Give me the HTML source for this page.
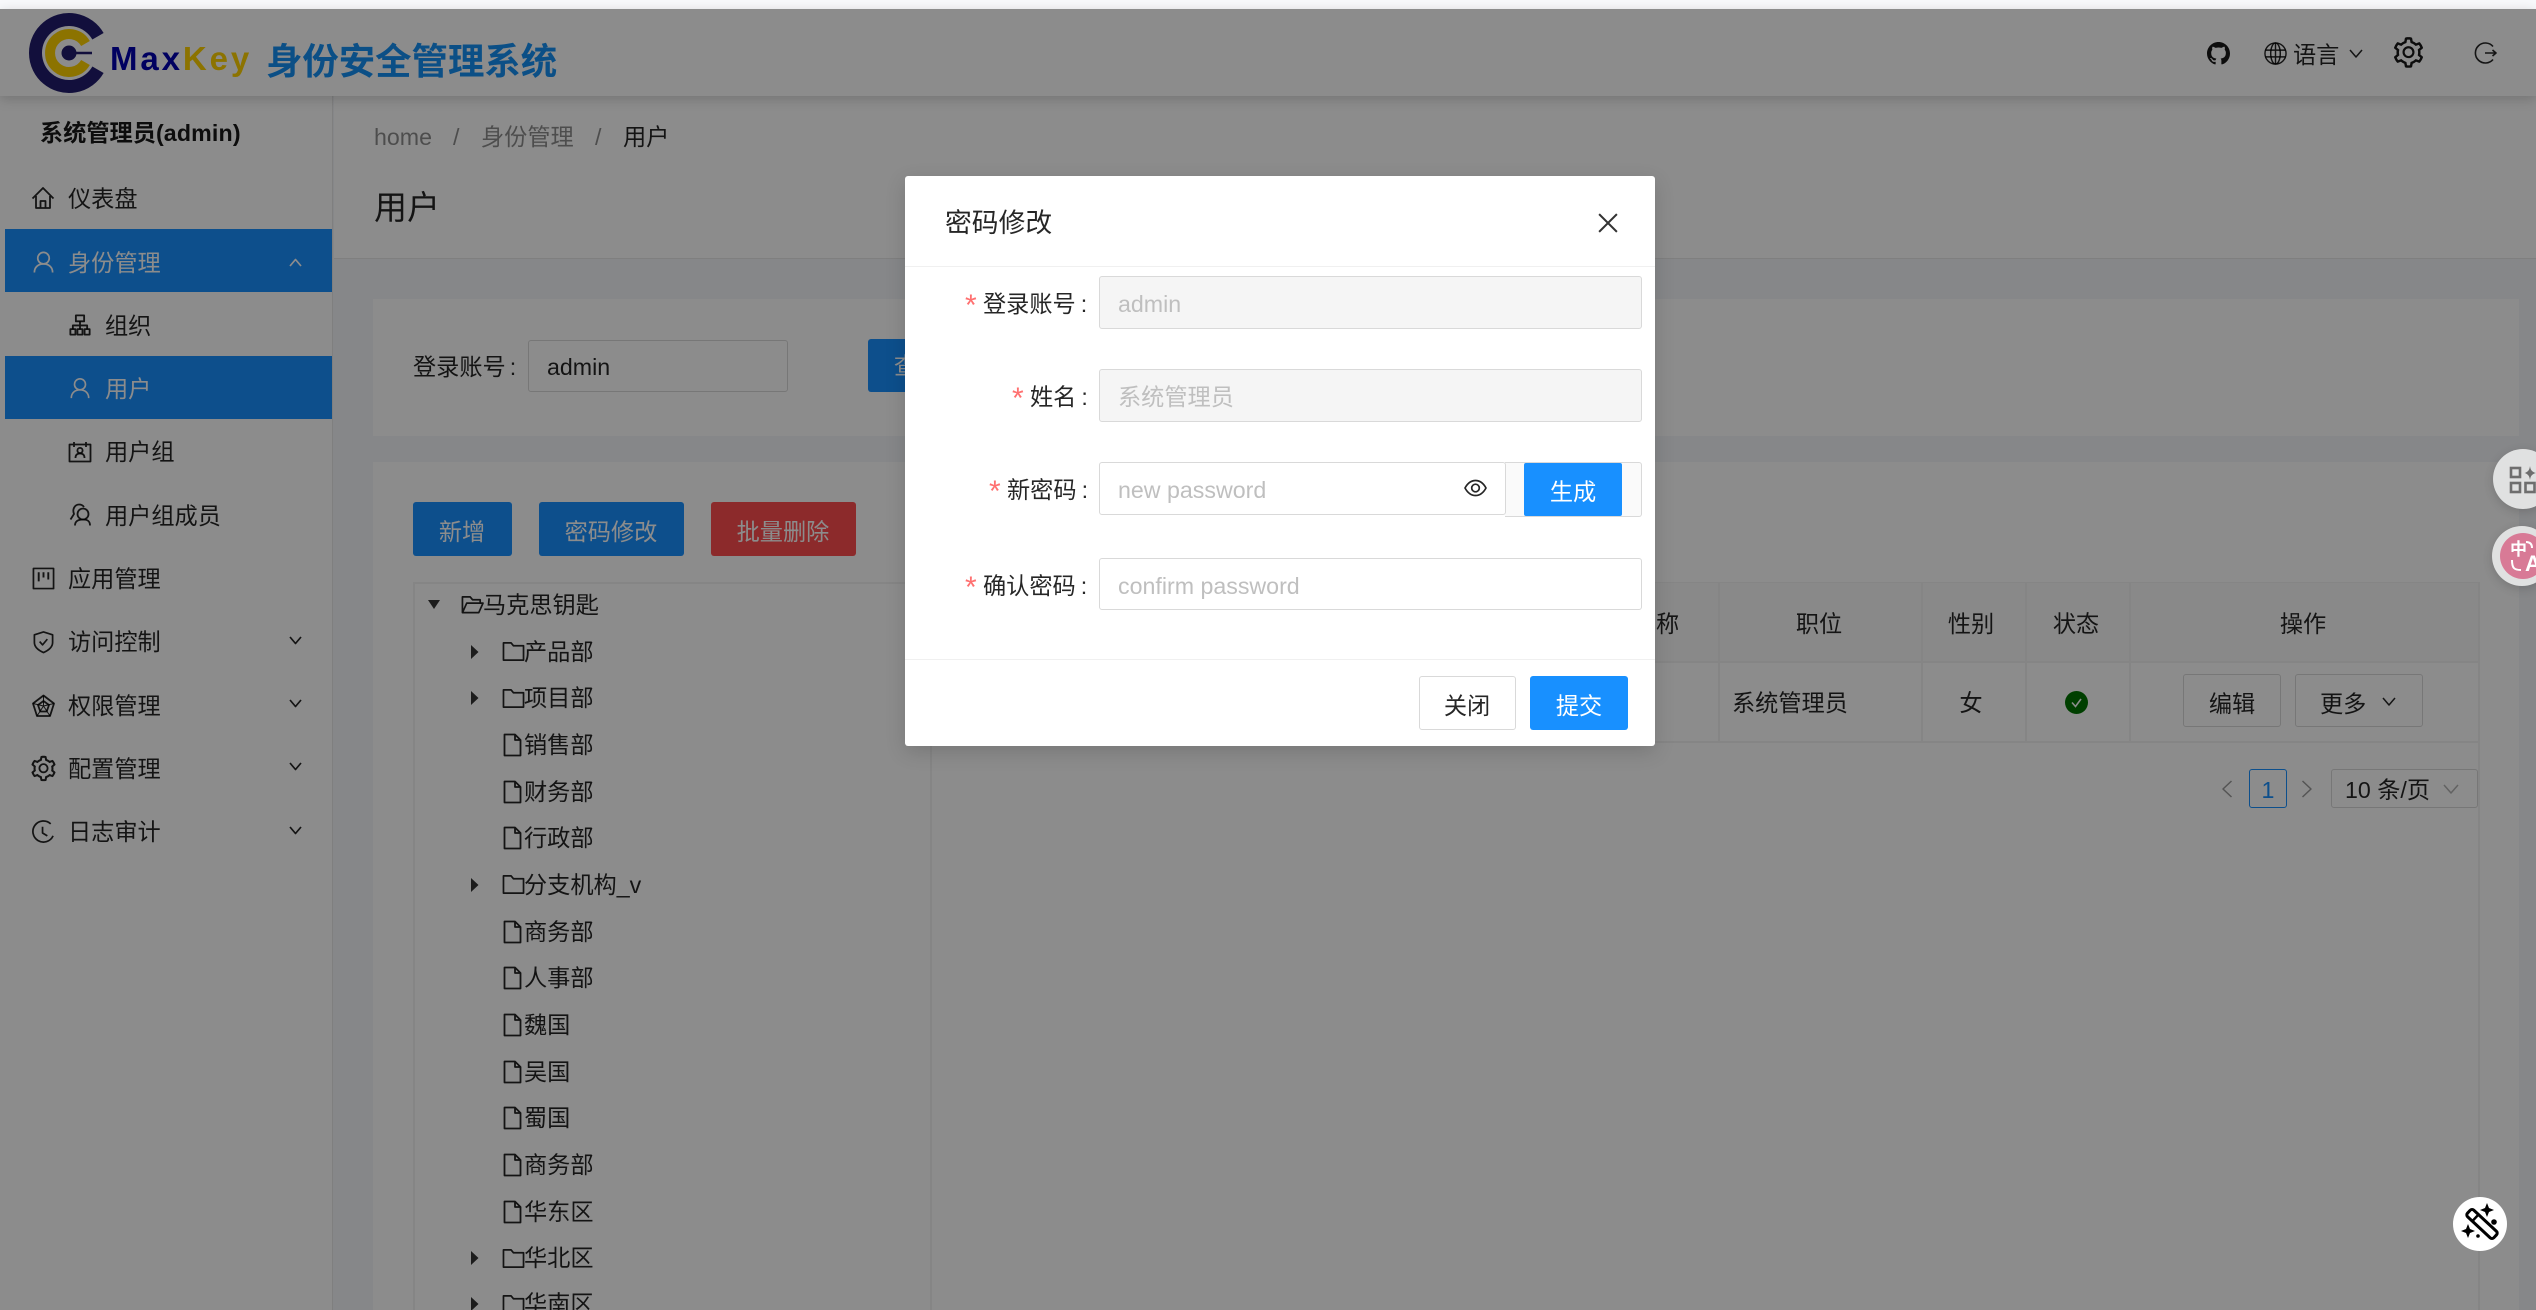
<!DOCTYPE html>
<html lang="zh">
<head>
<meta charset="utf-8">
<title>MaxKey</title>
<style>
html,body{margin:0;padding:0;width:2536px;height:1310px;overflow:hidden;background:#f5f6f9}
body{position:relative;font-family:"Liberation Sans","Noto Sans CJK SC",sans-serif;font-size:23.2px;color:rgba(0,0,0,.85)}
div,span,svg{box-sizing:border-box}
.a{position:absolute}
.t{position:absolute;white-space:nowrap;line-height:40px;margin-top:-19.3px}
.c{position:absolute;white-space:nowrap;line-height:40px;margin-top:-19.3px;transform:translateX(-50%)}
.w{color:#fff}
.i{position:absolute;fill:none;stroke:rgba(0,0,0,.85);stroke-width:1.8;stroke-linejoin:round}
.btn{position:absolute;border-radius:3px}
.inp{position:absolute;border:1.6px solid #d9d9d9;border-radius:3px;background:#fff}
.star{position:absolute;color:#ff7070;font-size:30px;line-height:40px;margin-top:-17px}
.ph{color:#bfbfbf}
.line{position:absolute;background:#f2f2f2}
.col{margin-left:5px}
</style>
</head>
<body>
<!-- top strip -->
<div class="a" style="left:0;top:0;width:2536px;height:9px;background:#f8f9fb"></div>

<!-- header -->
<div class="a" style="left:0;top:9px;width:2536px;height:87px;background:#fff;box-shadow:0 3px 12px rgba(0,0,0,.18);z-index:3"></div>
<div class="a" style="left:0;top:0;width:2536px;height:96px;z-index:4">
  <svg class="a" style="left:0;top:0" width="120" height="96" fill="none">
    <path d="M98 36.25A33.5 33.5 0 1 0 98 69.75" stroke="#211d6e" stroke-width="13"/>
    <path d="M85.5 43.5A19 19 0 1 0 85.5 62.5" stroke="#ffd200" stroke-width="10"/>
    <circle cx="69" cy="53" r="7.5" fill="#211d6e"/>
    <path d="M70 53H92" stroke="#211d6e" stroke-width="2.6"/>
  </svg>
  <div class="t" style="left:110px;top:58.500px;font-size:33px;font-weight:bold;letter-spacing:2.9px"><span style="color:#0000b0">Max</span><span style="color:#ffd200">Key</span></div>
  <div class="t" style="left:266px;top:58.500px;font-size:36.400px;font-weight:bold;color:#1590f5;font-family:'Noto Sans CJK SC',sans-serif">身份安全管理系统</div>

  <svg class="a" style="left:2207px;top:42px" width="23" height="23" viewBox="0 0 16 16"><path fill="rgba(0,0,0,.9)" d="M8 0C3.58 0 0 3.58 0 8c0 3.54 2.29 6.53 5.47 7.59.4.07.55-.17.55-.38 0-.19-.01-.82-.01-1.49-2.01.37-2.53-.49-2.69-.94-.09-.23-.48-.94-.82-1.13-.28-.15-.68-.52-.01-.53.63-.01 1.08.58 1.23.82.72 1.21 1.87.87 2.33.66.07-.52.28-.87.51-1.07-1.78-.2-3.64-.89-3.64-3.95 0-.87.31-1.59.82-2.15-.08-.2-.36-1.02.08-2.12 0 0 .67-.21 2.2.82.64-.18 1.32-.27 2-.27.68 0 1.36.09 2 .27 1.53-1.04 2.2-.82 2.2-.82.44 1.1.16 1.92.08 2.12.51.56.82 1.27.82 2.15 0 3.07-1.87 3.75-3.65 3.95.29.25.54.73.54 1.48 0 1.07-.01 1.93-.01 2.2 0 .21.15.46.55.38A8.013 8.013 0 0016 8c0-4.42-3.58-8-8-8z"/></svg>
  <svg class="i" style="left:2264px;top:42px;stroke-width:1.5" width="23" height="23" viewBox="0 0 24 24"><circle cx="12" cy="12" r="11"/><ellipse cx="12" cy="12" rx="5" ry="11"/><path d="M12 1V23M1.5 8.5H22.5M1.5 15.5H22.5"/></svg>
  <div class="t" style="left:2293px;top:54px">语言</div>
  <svg class="i" style="left:2349px;top:49px;stroke-width:1.5" width="14" height="9" viewBox="0 0 14 9"><path d="M1 1L7 8L13 1"/></svg>
  <svg class="a" style="left:2391px;top:35px" width="35" height="35" viewBox="0 0 1024 1024"><path fill="rgba(0,0,0,.9)" d="M924.8 625.7l-65.5-56c3.1-19 4.7-38.4 4.7-57.8s-1.6-38.8-4.7-57.8l65.5-56a32.03 32.03 0 0 0 9.3-35.2l-.9-2.6a443.74 443.74 0 0 0-79.7-137.9l-1.8-2.1a32.12 32.12 0 0 0-35.1-9.5l-81.3 28.9c-30-24.6-63.5-44-99.7-57.6l-15.7-85a32.05 32.05 0 0 0-25.8-25.7l-2.7-.5c-52.1-9.4-106.9-9.4-159 0l-2.7.5a32.05 32.05 0 0 0-25.8 25.7l-15.8 85.4a351.86 351.86 0 0 0-99 57.4l-81.9-29.1a32 32 0 0 0-35.1 9.5l-1.8 2.1a446.02 446.02 0 0 0-79.7 137.9l-.9 2.6c-4.5 12.5-.8 26.5 9.3 35.2l66.3 56.6c-3.1 18.8-4.6 38-4.6 57.1 0 19.2 1.5 38.4 4.6 57.1L99 625.5a32.03 32.03 0 0 0-9.3 35.2l.9 2.6c18.1 50.4 44.9 96.9 79.7 137.9l1.8 2.1a32.12 32.12 0 0 0 35.1 9.5l81.9-29.1c29.8 24.5 63.1 43.9 99 57.4l15.8 85.4a32.05 32.05 0 0 0 25.8 25.7l2.7.5a449.4 449.4 0 0 0 159 0l2.7-.5a32.05 32.05 0 0 0 25.8-25.7l15.7-85a350 350 0 0 0 99.7-57.6l81.3 28.9a32 32 0 0 0 35.1-9.5l1.8-2.1c34.8-41.1 61.6-87.5 79.7-137.9l.9-2.6c4.5-12.3.8-26.3-9.3-35zM788.3 465.9c2.5 15.1 3.8 30.6 3.8 46.1s-1.3 31-3.8 46.1l-6.6 40.1 74.7 63.9a370.03 370.03 0 0 1-42.6 73.6L721 702.8l-31.4 25.8c-23.9 19.6-50.5 35-79.3 45.8l-38.1 14.3-17.9 97a377.5 377.5 0 0 1-85 0l-17.9-97.2-37.8-14.5c-28.5-10.8-55-26.2-78.7-45.7l-31.4-25.9-93.4 33.2c-17-22.9-31.2-47.6-42.6-73.6l75.5-64.5-6.5-40c-2.4-14.9-3.7-30.3-3.7-45.5 0-15.3 1.2-30.6 3.7-45.5l6.5-40-75.5-64.5c11.3-26.1 25.6-50.7 42.6-73.6l93.4 33.2 31.4-25.9c23.7-19.5 50.2-34.9 78.7-45.7l37.9-14.3 17.9-97.2c28.1-3.2 56.8-3.2 85 0l17.9 97 38.1 14.3c28.7 10.8 55.4 26.2 79.3 45.8l31.4 25.8 92.8-32.9c17 22.9 31.2 47.6 42.6 73.6L781.8 426l6.5 39.9zM512 326c-97.2 0-176 78.8-176 176s78.8 176 176 176 176-78.8 176-176-78.8-176-176-176zm79.2 255.2A111.6 111.6 0 0 1 512 614c-29.9 0-58-11.7-79.2-32.8A111.6 111.6 0 0 1 400 502c0-29.9 11.7-58 32.8-79.2C454 401.6 482.1 390 512 390c29.9 0 58 11.6 79.2 32.8A111.6 111.6 0 0 1 624 502c0 29.9-11.7 58-32.8 79.2z"/></svg>
  <svg class="i" style="left:2473px;top:42px;stroke-width:1.6" width="24" height="22" viewBox="0 0 24 22"><path d="M20 4.5A10 10 0 1 0 20 17.5M12 11H23M19.5 8L23 11L19.5 14"/></svg>
</div>

<!-- sidebar -->
<div class="a" style="left:0;top:96px;width:333px;height:1214px;background:#fff;border-right:1.6px solid #e8e8e8"></div>
<div class="t" style="left:40px;top:132px;font-weight:bold;color:rgba(0,0,0,.9)">系统管理员<span style="letter-spacing:.15px">(admin)</span></div>
<div class="a" style="left:5px;top:229px;width:327px;height:63px;background:#1890ff"></div>
<div class="a" style="left:5px;top:356px;width:327px;height:63px;background:#1890ff"></div>

<div class="t" style="left:68px;top:198px">仪表盘</div>
<div class="t w" style="left:68px;top:262px">身份管理</div>
<div class="t" style="left:105px;top:325px">组织</div>
<div class="t w" style="left:105px;top:388px">用户</div>
<div class="t" style="left:105px;top:451px">用户组</div>
<div class="t" style="left:105px;top:515px">用户组成员</div>
<div class="t" style="left:68px;top:578px">应用管理</div>
<div class="t" style="left:68px;top:641px">访问控制</div>
<div class="t" style="left:68px;top:705px">权限管理</div>
<div class="t" style="left:68px;top:768px">配置管理</div>
<div class="t" style="left:68px;top:831px">日志审计</div>

<svg class="i" style="left:31px;top:186px" width="24" height="24" viewBox="0 0 24 24"><path d="M1.5 12.5L12 2L22.5 12.5M5 10V22H19V10M9.5 22V15H14.5V22"/></svg>
<svg class="i" style="left:32px;top:250px;stroke:#fff" width="23" height="24" viewBox="0 0 24 24"><circle cx="12" cy="8" r="6"/><path d="M2.5 23C2.5 17 7 14 12 14S21.5 17 21.5 23"/></svg>
<svg class="i" style="left:69px;top:314px;stroke-width:2" width="22" height="22" viewBox="0 0 24 24"><rect x="7.5" y="1.5" width="9" height="6.5"/><rect x="1.5" y="16.5" width="5.5" height="6"/><rect x="9.2" y="16.5" width="5.5" height="6"/><rect x="17" y="16.5" width="5.5" height="6"/><path d="M12 8V16.500M4.200 16.500V12.500H19.800V16.500"/></svg>
<svg class="i" style="left:69px;top:376px;stroke:#fff" width="22" height="24" viewBox="0 0 24 24"><circle cx="12" cy="8" r="6"/><path d="M2.5 23C2.5 17 7 14 12 14S21.5 17 21.5 23"/></svg>
<svg class="i" style="left:68px;top:441px" width="24" height="22" viewBox="0 0 24 22"><path d="M1.500 3.500H22.500V20.500H1.500ZM6 1V6M18 1V6"/><circle cx="12" cy="9.500" r="2.600"/><path d="M7.500 17C7.500 13.500 9.500 12.500 12 12.500S16.500 13.500 16.500 17"/></svg>
<svg class="i" style="left:69px;top:503px" width="22" height="24" viewBox="0 0 22 24"><circle cx="14" cy="11" r="5.500"/><path d="M6 22.500C6 18 9.500 16.500 14 16.500S21 18 21 22.500M1.500 16.500L5 11C3 6 6 1.500 10 1.500C12 1.500 14 2.500 15 4"/></svg>
<svg class="i" style="left:32px;top:567px" width="23" height="23" viewBox="0 0 24 24"><rect x="1.5" y="1.5" width="21" height="21"/><path d="M7 5.5V15M12 5.5V11M17 5.5V13" stroke-width="2"/></svg>
<svg class="i" style="left:32px;top:630px" width="23" height="24" viewBox="0 0 24 24"><path d="M12 1.5L21.5 4.5V12.5C21.5 18 16.5 21 12 23C7.5 21 2.5 18 2.5 12.5V4.5Z"/><path d="M8 11.5L11 15L16 9"/></svg>
<svg class="i" style="left:31px;top:694px" width="25" height="24" viewBox="0 0 24 24"><path d="M12 1.5L22.5 9.5L18.5 22H5.5L1.5 9.5Z"/><path d="M12 7L17.5 11L15.2 17.5H8.8L6.5 11Z"/><path d="M12 1.5V12L22.5 9.5M12 12L1.5 9.5M12 12L18.5 22M12 12L5.5 22" stroke-width="1"/></svg>
<svg class="a" style="left:29px;top:754px" width="29" height="29" viewBox="0 0 1024 1024"><path fill="rgba(0,0,0,.85)" d="M924.8 625.7l-65.5-56c3.1-19 4.7-38.4 4.7-57.8s-1.6-38.8-4.7-57.8l65.5-56a32.03 32.03 0 0 0 9.3-35.2l-.9-2.6a443.74 443.74 0 0 0-79.7-137.9l-1.8-2.1a32.12 32.12 0 0 0-35.1-9.5l-81.3 28.9c-30-24.6-63.5-44-99.7-57.6l-15.7-85a32.05 32.05 0 0 0-25.8-25.7l-2.7-.5c-52.1-9.4-106.9-9.4-159 0l-2.7.5a32.05 32.05 0 0 0-25.8 25.7l-15.8 85.4a351.86 351.86 0 0 0-99 57.4l-81.9-29.1a32 32 0 0 0-35.1 9.5l-1.8 2.1a446.02 446.02 0 0 0-79.7 137.9l-.9 2.6c-4.5 12.5-.8 26.5 9.3 35.2l66.3 56.6c-3.1 18.8-4.6 38-4.6 57.1 0 19.2 1.5 38.4 4.6 57.1L99 625.5a32.03 32.03 0 0 0-9.3 35.2l.9 2.6c18.1 50.4 44.9 96.9 79.7 137.9l1.8 2.1a32.12 32.12 0 0 0 35.1 9.5l81.9-29.1c29.8 24.5 63.1 43.9 99 57.4l15.8 85.4a32.05 32.05 0 0 0 25.8 25.7l2.7.5a449.4 449.4 0 0 0 159 0l2.7-.5a32.05 32.05 0 0 0 25.8-25.7l15.7-85a350 350 0 0 0 99.7-57.6l81.3 28.9a32 32 0 0 0 35.1-9.5l1.8-2.1c34.8-41.1 61.6-87.5 79.7-137.9l.9-2.6c4.5-12.3.8-26.3-9.3-35zM788.3 465.9c2.5 15.1 3.8 30.6 3.8 46.1s-1.3 31-3.8 46.1l-6.6 40.1 74.7 63.9a370.03 370.03 0 0 1-42.6 73.6L721 702.8l-31.4 25.8c-23.9 19.6-50.5 35-79.3 45.8l-38.1 14.3-17.9 97a377.5 377.5 0 0 1-85 0l-17.9-97.2-37.8-14.5c-28.5-10.8-55-26.2-78.7-45.7l-31.4-25.9-93.4 33.2c-17-22.9-31.2-47.6-42.6-73.6l75.5-64.5-6.5-40c-2.4-14.9-3.7-30.3-3.7-45.5 0-15.3 1.2-30.6 3.7-45.5l6.5-40-75.5-64.5c11.3-26.1 25.6-50.7 42.6-73.6l93.4 33.2 31.4-25.9c23.7-19.5 50.2-34.9 78.7-45.7l37.9-14.3 17.9-97.2c28.1-3.2 56.8-3.2 85 0l17.9 97 38.1 14.3c28.7 10.8 55.4 26.2 79.3 45.8l31.4 25.8 92.8-32.9c17 22.9 31.2 47.6 42.6 73.6L781.8 426l6.5 39.9zM512 326c-97.2 0-176 78.8-176 176s78.8 176 176 176 176-78.8 176-176-78.8-176-176-176zm79.2 255.2A111.6 111.6 0 0 1 512 614c-29.9 0-58-11.7-79.2-32.8A111.6 111.6 0 0 1 400 502c0-29.9 11.7-58 32.8-79.2C454 401.6 482.1 390 512 390c29.9 0 58 11.6 79.2 32.8A111.6 111.6 0 0 1 624 502c0 29.9-11.7 58-32.8 79.2z"/></svg>
<svg class="i" style="left:32px;top:820px" width="23" height="24" viewBox="0 0 24 24"><path d="M19.5 3.5A11 11 0 1 0 22 16"/><path d="M11 6.5V13L16 16"/></svg>

<svg class="i" style="left:289px;top:258px;stroke:#fff;stroke-width:1.7" width="13" height="9" viewBox="0 0 13 9"><path d="M1 8L6.5 1.5L12 8"/></svg>
<svg class="i" style="left:289px;top:636px;stroke-width:1.7" width="13" height="9" viewBox="0 0 13 9"><path d="M1 1L6.5 7.5L12 1"/></svg>
<svg class="i" style="left:289px;top:699px;stroke-width:1.7" width="13" height="9" viewBox="0 0 13 9"><path d="M1 1L6.5 7.5L12 1"/></svg>
<svg class="i" style="left:289px;top:762px;stroke-width:1.7" width="13" height="9" viewBox="0 0 13 9"><path d="M1 1L6.5 7.5L12 1"/></svg>
<svg class="i" style="left:289px;top:826px;stroke-width:1.7" width="13" height="9" viewBox="0 0 13 9"><path d="M1 1L6.5 7.5L12 1"/></svg>

<!-- page header -->
<div class="a" style="left:334px;top:96px;width:2202px;height:163px;background:#fff;border-bottom:1.6px solid #e8e8e8"></div>
<div class="t" style="left:374px;top:136px;color:rgba(0,0,0,.45)">home</div>
<div class="t" style="left:453px;top:136px;color:rgba(0,0,0,.45)">/</div>
<div class="t" style="left:481px;top:136px;color:rgba(0,0,0,.45)">身份管理</div>
<div class="t" style="left:595px;top:136px;color:rgba(0,0,0,.45)">/</div>
<div class="t" style="left:623px;top:136px">用户</div>
<div class="t" style="left:374px;top:207px;font-size:33px">用户</div>

<!-- search card -->
<div class="a" style="left:373px;top:299px;width:2146px;height:137px;background:#fff"></div>
<div class="t" style="left:413px;top:366px">登录账号<span style="margin-left:4px">:</span></div>
<div class="inp" style="left:528px;top:340px;width:260px;height:52px"></div>
<div class="t" style="left:547px;top:366px">admin</div>
<div class="btn" style="left:868px;top:339px;width:99px;height:53px;background:#1890ff"></div>
<div class="c w" style="left:917px;top:365px">查询</div>

<!-- list card -->
<div class="a" style="left:373px;top:462px;width:2146px;height:848px;background:#fff"></div>
<div class="btn" style="left:413px;top:502px;width:99px;height:54px;background:#1890ff"></div>
<div class="c w" style="left:462px;top:531px">新增</div>
<div class="btn" style="left:539px;top:502px;width:145px;height:54px;background:#1890ff"></div>
<div class="c w" style="left:611px;top:531px">密码修改</div>
<div class="btn" style="left:711px;top:502px;width:145px;height:54px;background:#ff4d4f"></div>
<div class="c w" style="left:783px;top:531px">批量删除</div>

<!-- panel borders -->
<div class="line" style="left:413px;top:582px;width:2066px;height:1.6px"></div>
<div class="line" style="left:413px;top:582px;width:1.6px;height:728px"></div>
<div class="line" style="left:930px;top:582px;width:1.6px;height:728px"></div>
<div class="line" style="left:2478px;top:582px;width:1.6px;height:728px"></div>

<!-- tree -->
<svg class="a" style="left:427px;top:599px" width="14" height="11" viewBox="0 0 14 11"><path d="M1 1H13L7 10Z" fill="rgba(0,0,0,.8)"/></svg>
<svg class="i" style="left:461px;top:594px" width="23" height="22" viewBox="0 0 24 22"><path d="M1.5 19V2.5H9.5L12 5.5H20V9M1.5 19L6 9H23L18.5 19Z"/></svg>
<div class="t" style="left:483px;top:604px">马克思钥匙</div>

<svg class="a" style="left:470px;top:645px" width="9" height="14" viewBox="0 0 9 14"><path d="M1 0V14L8.5 7Z" fill="rgba(0,0,0,.8)"/></svg>
<svg class="i" style="left:502px;top:641px" width="23" height="21" viewBox="0 0 24 22"><path d="M1.5 20V2H9.5L12 5H22.5V20Z"/></svg>
<div class="t" style="left:524px;top:651px">产品部</div>
<svg class="a" style="left:470px;top:691px" width="9" height="14" viewBox="0 0 9 14"><path d="M1 0V14L8.5 7Z" fill="rgba(0,0,0,.8)"/></svg>
<svg class="i" style="left:502px;top:688px" width="23" height="21" viewBox="0 0 24 22"><path d="M1.5 20V2H9.5L12 5H22.5V20Z"/></svg>
<div class="t" style="left:524px;top:697px">项目部</div>
<svg class="i" style="left:503px;top:733px" width="19" height="24" viewBox="0 0 19 24"><path d="M1.5 1.5H12L17.5 7V22.5H1.5ZM12 1.5V7H17.5"/></svg>
<div class="t" style="left:524px;top:744px">销售部</div>
<svg class="i" style="left:503px;top:780px" width="19" height="24" viewBox="0 0 19 24"><path d="M1.5 1.5H12L17.5 7V22.5H1.5ZM12 1.5V7H17.5"/></svg>
<div class="t" style="left:524px;top:791px">财务部</div>
<svg class="i" style="left:503px;top:826px" width="19" height="24" viewBox="0 0 19 24"><path d="M1.5 1.5H12L17.5 7V22.5H1.5ZM12 1.5V7H17.5"/></svg>
<div class="t" style="left:524px;top:837px">行政部</div>
<svg class="a" style="left:470px;top:878px" width="9" height="14" viewBox="0 0 9 14"><path d="M1 0V14L8.5 7Z" fill="rgba(0,0,0,.8)"/></svg>
<svg class="i" style="left:502px;top:874px" width="23" height="21" viewBox="0 0 24 22"><path d="M1.5 20V2H9.5L12 5H22.5V20Z"/></svg>
<div class="t" style="left:524px;top:884px">分支机构_v</div>
<svg class="i" style="left:503px;top:920px" width="19" height="24" viewBox="0 0 19 24"><path d="M1.5 1.5H12L17.5 7V22.5H1.5ZM12 1.5V7H17.5"/></svg>
<div class="t" style="left:524px;top:931px">商务部</div>
<svg class="i" style="left:503px;top:966px" width="19" height="24" viewBox="0 0 19 24"><path d="M1.5 1.5H12L17.5 7V22.5H1.5ZM12 1.5V7H17.5"/></svg>
<div class="t" style="left:524px;top:977px">人事部</div>
<svg class="i" style="left:503px;top:1013px" width="19" height="24" viewBox="0 0 19 24"><path d="M1.5 1.5H12L17.5 7V22.5H1.5ZM12 1.5V7H17.5"/></svg>
<div class="t" style="left:524px;top:1024px">魏国</div>
<svg class="i" style="left:503px;top:1060px" width="19" height="24" viewBox="0 0 19 24"><path d="M1.5 1.5H12L17.5 7V22.5H1.5ZM12 1.5V7H17.5"/></svg>
<div class="t" style="left:524px;top:1071px">吴国</div>
<svg class="i" style="left:503px;top:1106px" width="19" height="24" viewBox="0 0 19 24"><path d="M1.5 1.5H12L17.5 7V22.5H1.5ZM12 1.5V7H17.5"/></svg>
<div class="t" style="left:524px;top:1117px">蜀国</div>
<svg class="i" style="left:503px;top:1153px" width="19" height="24" viewBox="0 0 19 24"><path d="M1.5 1.5H12L17.5 7V22.5H1.5ZM12 1.5V7H17.5"/></svg>
<div class="t" style="left:524px;top:1164px">商务部</div>
<svg class="i" style="left:503px;top:1200px" width="19" height="24" viewBox="0 0 19 24"><path d="M1.5 1.5H12L17.5 7V22.5H1.5ZM12 1.5V7H17.5"/></svg>
<div class="t" style="left:524px;top:1211px">华东区</div>
<svg class="a" style="left:470px;top:1251px" width="9" height="14" viewBox="0 0 9 14"><path d="M1 0V14L8.5 7Z" fill="rgba(0,0,0,.8)"/></svg>
<svg class="i" style="left:502px;top:1248px" width="23" height="21" viewBox="0 0 24 22"><path d="M1.5 20V2H9.5L12 5H22.5V20Z"/></svg>
<div class="t" style="left:524px;top:1257px">华北区</div>
<svg class="a" style="left:470px;top:1297px" width="9" height="14" viewBox="0 0 9 14"><path d="M1 0V14L8.5 7Z" fill="rgba(0,0,0,.8)"/></svg>
<svg class="i" style="left:502px;top:1294px" width="23" height="21" viewBox="0 0 24 22"><path d="M1.5 20V2H9.5L12 5H22.5V20Z"/></svg>
<div class="t" style="left:524px;top:1303px">华南区</div>

<!-- table -->
<div class="a" style="left:950px;top:583px;width:1528px;height:78px;background:#fafafa"></div>
<div class="line" style="left:950px;top:661px;width:1528px;height:1.6px"></div>
<div class="line" style="left:950px;top:741px;width:1528px;height:1.6px"></div>
<div class="line" style="left:1718px;top:583px;width:1.6px;height:159px"></div>
<div class="line" style="left:1921px;top:583px;width:1.6px;height:159px"></div>
<div class="line" style="left:2025px;top:583px;width:1.6px;height:159px"></div>
<div class="line" style="left:2129px;top:583px;width:1.6px;height:159px"></div>
<div class="t" style="left:1656px;top:623px">称</div>
<div class="c" style="left:1819px;top:623px">职位</div>
<div class="c" style="left:1971px;top:623px">性别</div>
<div class="c" style="left:2076px;top:623px">状态</div>
<div class="c" style="left:2303px;top:623px">操作</div>
<div class="t" style="left:1732px;top:702px">系统管理员</div>
<div class="c" style="left:1971px;top:702px">女</div>
<svg class="a" style="left:2065px;top:691px" width="23" height="23" viewBox="0 0 23 23"><circle cx="11.5" cy="11.5" r="11.5" fill="#007400"/><path d="M7 11.5L10.5 15.5L16 8" stroke="#fff" stroke-width="1.6" fill="none"/></svg>
<div class="a" style="left:2183px;top:674px;width:98px;height:53px;border:1.6px solid #d9d9d9;border-radius:3px"></div>
<div class="c" style="left:2232px;top:703px">编辑</div>
<div class="a" style="left:2295px;top:674px;width:128px;height:53px;border:1.6px solid #d9d9d9;border-radius:3px"></div>
<div class="t" style="left:2320px;top:703px">更多</div>
<svg class="i" style="left:2382px;top:697px;stroke-width:1.5" width="14" height="9" viewBox="0 0 14 9"><path d="M1 1L7 8L13 1"/></svg>
<!-- pagination -->
<svg class="i" style="left:2221px;top:779px;stroke:rgba(0,0,0,.4);stroke-width:1.5" width="12" height="20" viewBox="0 0 12 20"><path d="M10.5 2L2 10L10.5 18"/></svg>
<div class="a" style="left:2249px;top:769px;width:38px;height:39px;border:1.6px solid #1890ff;border-radius:3px"></div>
<div class="c" style="left:2268px;top:789px;color:#1890ff">1</div>
<svg class="i" style="left:2301px;top:779px;stroke:rgba(0,0,0,.4);stroke-width:1.5" width="12" height="20" viewBox="0 0 12 20"><path d="M1.5 2L10 10L1.5 18"/></svg>
<div class="a" style="left:2331px;top:769px;width:147px;height:39px;border:1.6px solid #d9d9d9;border-radius:3px"></div>
<div class="t" style="left:2345px;top:789px">10 条/页</div>
<svg class="i" style="left:2443px;top:784px;stroke:rgba(0,0,0,.3);stroke-width:1.5" width="16" height="10" viewBox="0 0 16 10"><path d="M1 1L8 9L15 1"/></svg>

<!-- mask -->
<div class="a" style="left:0;top:9px;width:2536px;height:1301px;background:rgba(0,0,0,.45);z-index:10"></div>

<!-- floats -->
<div class="a" style="left:2493px;top:449px;width:60px;height:60px;border-radius:50%;background:#e0e1e1;z-index:11;box-shadow:0 3px 10px rgba(0,0,0,.15)"></div>
<svg class="a" style="left:2500px;top:455px;z-index:12" width="36" height="45" viewBox="0 0 36 45" fill="none" stroke="#6e6e6e" stroke-width="2.6"><rect x="11" y="13" width="9" height="9"/><rect x="11" y="28" width="9" height="9"/><rect x="25.500" y="28" width="9" height="9"/><path d="M30 11C30.500 15 32 17 36 18C32 19 30.500 21 30 25C29.500 21 28 19 24.500 18C28 17 29.500 15 30 11Z" fill="#6e6e6e" stroke="none"/></svg>
<div class="a" style="left:2492px;top:526px;width:60px;height:60px;border-radius:50%;background:#e0e1e1;z-index:11;box-shadow:0 3px 10px rgba(0,0,0,.15)"></div>
<div class="a" style="left:2500px;top:533px;width:46px;height:46px;border-radius:50%;background:#d87a96;z-index:12"></div>
<div class="a" style="left:2510px;top:536px;font-size:17px;line-height:24px;color:#fff;font-weight:bold;z-index:13;font-family:'Noto Sans CJK SC',sans-serif">中</div>
<div class="a" style="left:2525px;top:552px;font-size:22px;line-height:24px;color:#fff;font-weight:bold;z-index:13">A</div>
<svg class="a" style="left:2510px;top:538px;z-index:13" width="26" height="36" viewBox="0 0 26 36" fill="none" stroke="#fff" stroke-width="2"><path d="M2 22C2 30 4 32 11 32M16 4C20 4 22 6 22 10"/></svg>

<div class="a" style="left:2453px;top:1197px;width:54px;height:54px;border-radius:50%;background:#fff;z-index:11"></div>
<svg class="a" style="left:2453px;top:1197px;z-index:12" width="54" height="54" viewBox="0 0 54 54">
  <g transform="rotate(43 29 27)"><rect x="11" y="22.500" width="36" height="9" rx="2.500" fill="#fff" stroke="#000" stroke-width="3"/><path d="M20 22.500V31.500" stroke="#000" stroke-width="2.500"/></g>
  <path d="M34 6L36 11L41 13L36 15L34 20L32 15L27 13L32 11Z" fill="#000"/>
  <path d="M15 27L17 32L22 34L17 36L15 41L13 36L8 34L13 32Z" fill="#000"/>
  <circle cx="41" cy="25" r="2.800" fill="#000"/>
  <circle cx="25" cy="39" r="1.800" fill="#000"/>
</svg>

<!-- modal -->
<div class="a" style="left:905px;top:176px;width:750px;height:570px;background:#fff;border-radius:3px;box-shadow:0 6px 20px rgba(0,0,0,.15);z-index:20;overflow:hidden">
  <div class="a" style="left:0;top:90px;width:750px;height:1.2px;background:#f0f0f0"></div>
  <div class="a" style="left:0;top:483px;width:750px;height:1.2px;background:#f0f0f0"></div>
  <div class="t" style="left:40px;top:46.500px;font-size:26.800px">密码修改</div>
  <svg class="i" style="left:693px;top:37px;stroke-width:1.8;stroke:rgba(0,0,0,.8)" width="20" height="20" viewBox="0 0 18 18"><path d="M1 1L17 17M17 1L1 17"/></svg>

  <!-- row 1 -->
  <div class="star" style="left:60px;top:127px">*</div>
  <div class="t" style="left:78px;top:127px">登录账号<span class="col">:</span></div>
  <div class="inp" style="left:194px;top:100px;width:543px;height:53px;background:#f5f5f5"></div>
  <div class="t ph" style="left:213px;top:127px">admin</div>
  <!-- row 2 -->
  <div class="star" style="left:107px;top:220px">*</div>
  <div class="t" style="left:125px;top:220px">姓名<span class="col">:</span></div>
  <div class="inp" style="left:194px;top:193px;width:543px;height:53px;background:#f5f5f5"></div>
  <div class="t ph" style="left:213px;top:220px">系统管理员</div>
  <!-- row 3 -->
  <div class="a" style="left:600px;top:286px;width:137px;height:55px;background:#fafafa;border:1.6px solid #d9d9d9;border-left:0;border-radius:0 3px 3px 0"></div>
  <div class="inp" style="left:194px;top:286px;width:407px;height:53px"></div>
  <div class="star" style="left:84px;top:313px">*</div>
  <div class="t" style="left:102px;top:313px">新密码<span class="col">:</span></div>
  <div class="t ph" style="left:213px;top:313px">new password</div>
  <svg class="i" style="left:559px;top:303px;stroke-width:1.7" width="23" height="18" viewBox="0 0 23 18"><path d="M1 9C4 3.500 7.500 1.500 11.500 1.500S19 3.500 22 9C19 14.500 15.500 16.500 11.500 16.500S4 14.500 1 9Z"/><circle cx="11.500" cy="9" r="3.800"/></svg>
  <div class="a" style="left:619px;top:287px;width:98px;height:53px;background:#1890ff;border-radius:2px"></div>
  <div class="c w" style="left:668px;top:315px">生成</div>
  <!-- row 4 -->
  <div class="star" style="left:60px;top:409px">*</div>
  <div class="t" style="left:78px;top:409px">确认密码<span class="col">:</span></div>
  <div class="inp" style="left:194px;top:382px;width:543px;height:52px"></div>
  <div class="t ph" style="left:213px;top:409px">confirm password</div>
  <!-- footer -->
  <div class="a" style="left:514px;top:500px;width:97px;height:54px;border:1.6px solid #d9d9d9;border-radius:3px;background:#fff"></div>
  <div class="c" style="left:562px;top:529px">关闭</div>
  <div class="a" style="left:625px;top:500px;width:98px;height:54px;background:#1890ff;border-radius:3px"></div>
  <div class="c w" style="left:674px;top:529px">提交</div>
</div>
</body>
</html>
